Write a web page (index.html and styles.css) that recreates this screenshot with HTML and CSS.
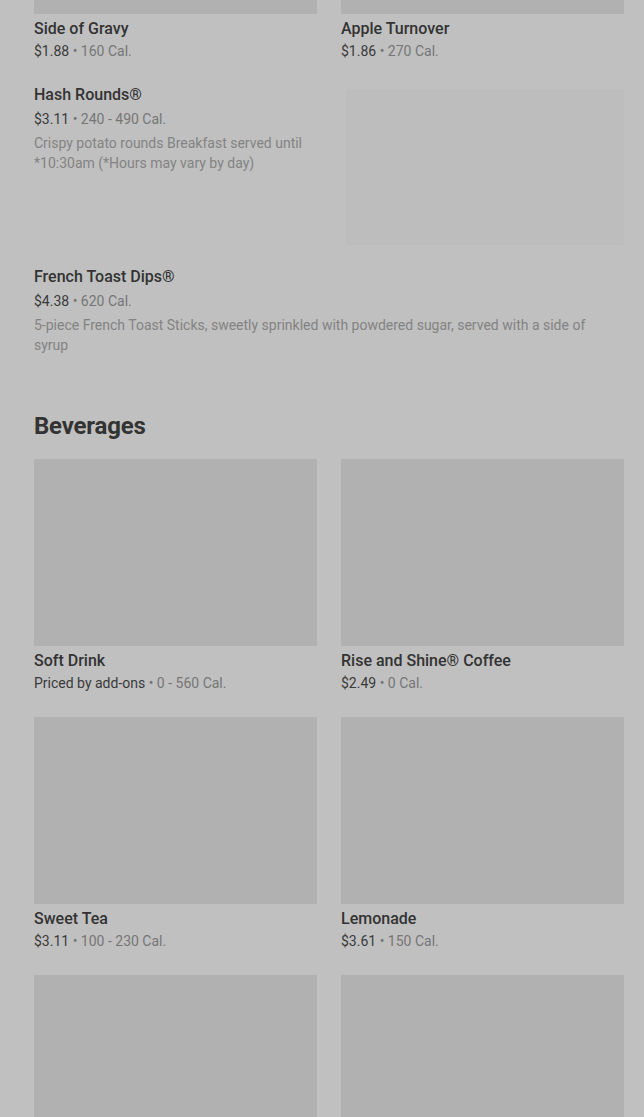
FILE: index.html
```html
<!DOCTYPE html>
<html lang="en">
<head>
  <meta charset="UTF-8" />
  <meta name="viewport" content="width=device-width, initial-scale=1.0"/>
  <title>Menu</title>
  <link rel="stylesheet" href="styles.css">
</head>
<body>

<div class="menu">

  <div class="grid">
    <div class="card">
      <div class="thumb"></div>
      <div class="item-name">Side of Gravy</div>
      <div class="item-meta"><span class="price">$1.88</span> • 160 Cal.</div>
    </div>
    <div class="card">
      <div class="thumb"></div>
      <div class="item-name">Apple Turnover</div>
      <div class="item-meta"><span class="price">$1.86</span> • 270 Cal.</div>
    </div>
  </div>

  <div class="row-item">
    <div class="row-text">
      <div class="item-name">Hash Rounds®</div>
      <div class="item-meta wide"><span class="price">$3.11</span> • 240 - 490 Cal.</div>
      <div class="item-desc">Crispy potato rounds Breakfast served until *10:30am (*Hours may vary by day)</div>
    </div>
    <div class="row-thumb"></div>
  </div>

  <div class="row-item">
    <div class="row-text full">
      <div class="item-name">French Toast Dips®</div>
      <div class="item-meta wide"><span class="price">$4.38</span> • 620 Cal.</div>
      <div class="item-desc">5-piece French Toast Sticks, sweetly sprinkled with powdered sugar, served with a side of syrup</div>
    </div>
  </div>

  <h2 class="section-title">Beverages</h2>

  <div class="grid">
    <div class="card">
      <div class="thumb"></div>
      <div class="item-name">Soft Drink</div>
      <div class="item-meta"><span class="price">Priced by add-ons</span> • 0 - 560 Cal.</div>
    </div>
    <div class="card">
      <div class="thumb"></div>
      <div class="item-name">Rise and Shine® Coffee</div>
      <div class="item-meta"><span class="price">$2.49</span> • 0 Cal.</div>
    </div>
    <div class="card">
      <div class="thumb"></div>
      <div class="item-name">Sweet Tea</div>
      <div class="item-meta"><span class="price">$3.11</span> • 100 - 230 Cal.</div>
    </div>
    <div class="card">
      <div class="thumb"></div>
      <div class="item-name">Lemonade</div>
      <div class="item-meta"><span class="price">$3.61</span> • 150 Cal.</div>
    </div>
    <div class="card">
      <div class="thumb"></div>
    </div>
    <div class="card">
      <div class="thumb"></div>
    </div>
  </div>

</div>

</body>
</html>
```

FILE: styles.css
```css
body {
  font-family: Roboto, "Liberation Sans", sans-serif;
  background: #c0c0c0;
  margin: 0;
  padding: 0;
  overflow: hidden;
}

.menu {
  margin-top: -173px;
  padding: 0 20px 0 34px;
}

.grid {
  display: grid;
  grid-template-columns: 283px 283px;
  column-gap: 24px;
  row-gap: 24px;
}

.thumb {
  height: 187px;
  background: #b1b1b1;
}

.item-name {
  margin-top: 5px;
  font-size: 16px;
  line-height: 20px;
  font-weight: 500;
  color: #333333;
}

.item-meta {
  margin-top: 2px;
  font-size: 14px;
  line-height: 20px;
  color: #767676;
}

.item-meta.wide {
  margin-top: 4px;
}

.price {
  color: #3a3a3a;
}

.item-desc {
  margin-top: 4px;
  font-size: 14px;
  line-height: 20px;
  color: #838383;
}

.row-item {
  display: flex;
  justify-content: space-between;
  margin-top: 24px;
}

.row-text {
  width: 284px;
}

.row-text .item-name {
  margin-top: 0;
}

.row-text.full {
  width: 560px;
}

.row-thumb {
  width: 276px;
  height: 154px;
  margin-top: 4px;
  background: #bdbdbd;
  box-shadow: -1px 1px 2px rgba(0,0,0,0.04);
}

.section-title {
  margin: 55px 0 17px;
  font-size: 24px;
  line-height: 32px;
  font-weight: 700;
  color: #333333;
  letter-spacing: -0.2px;
}
```
